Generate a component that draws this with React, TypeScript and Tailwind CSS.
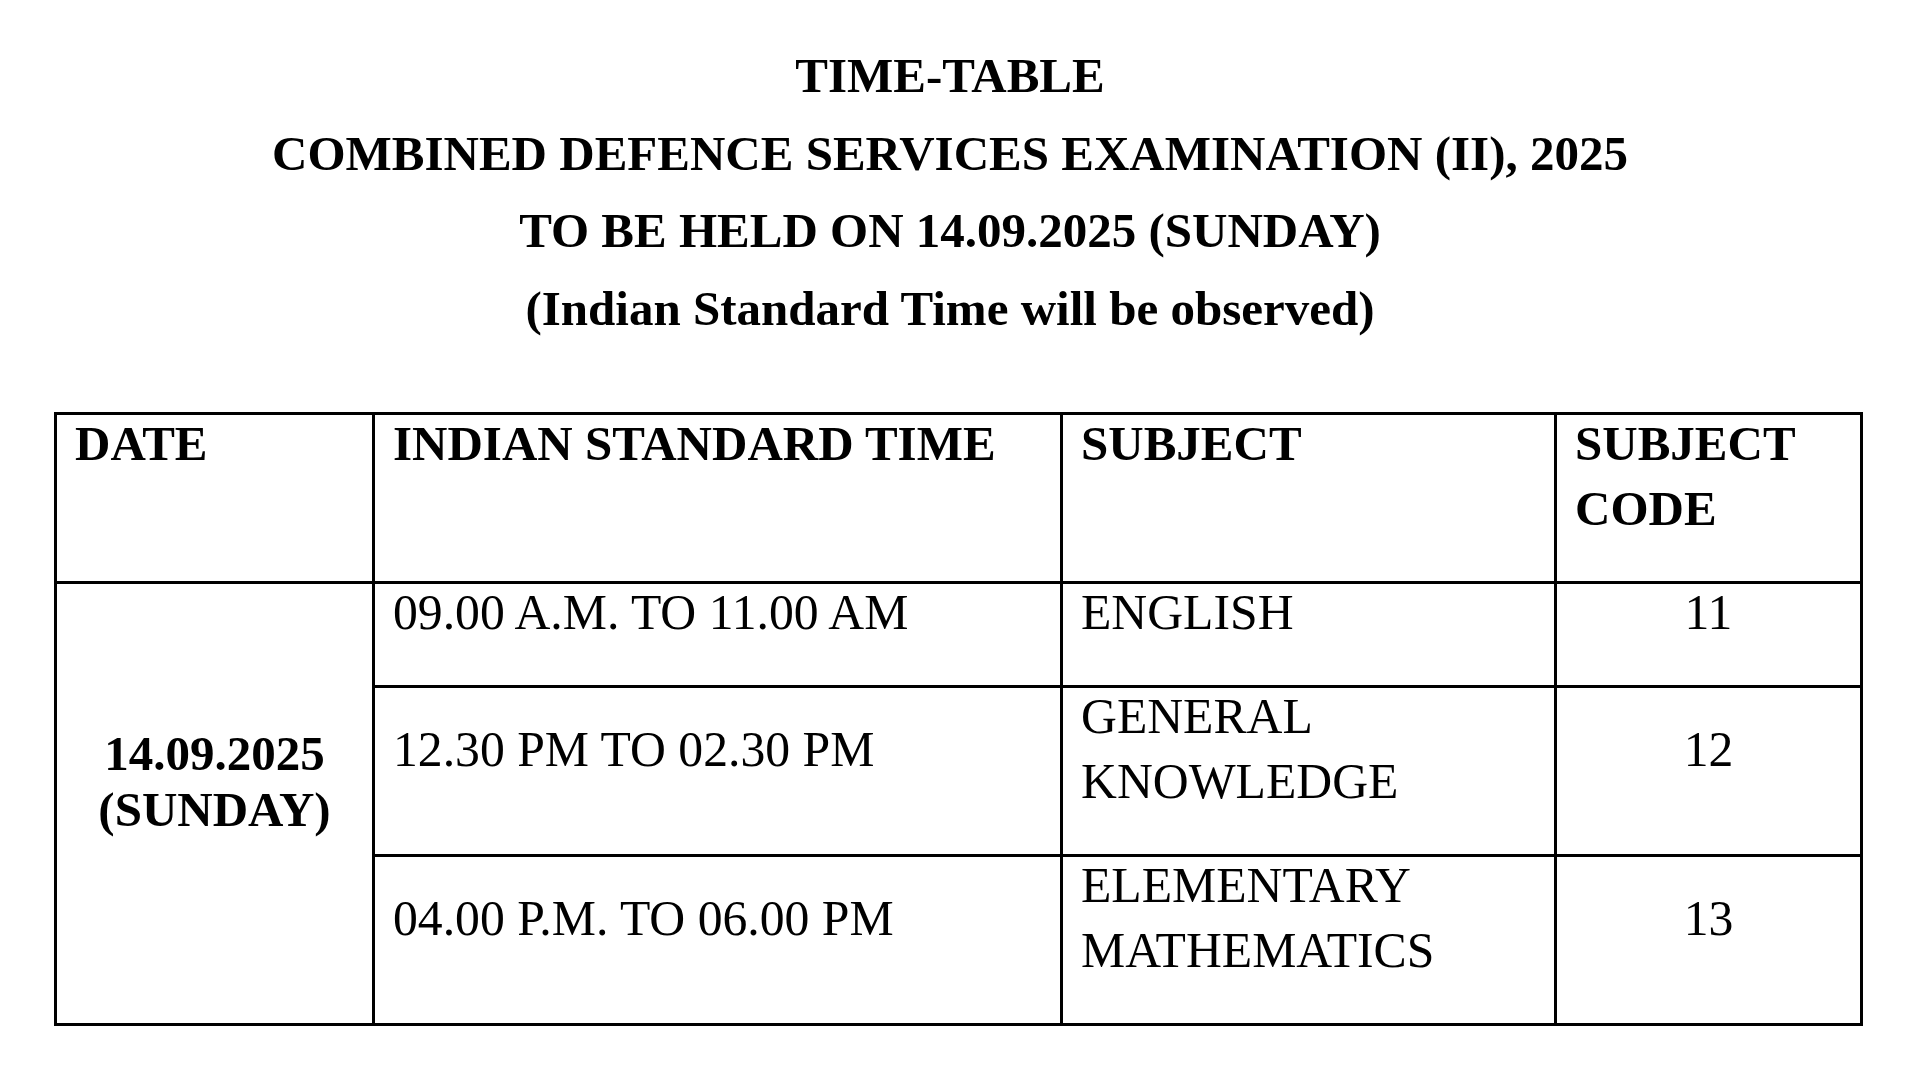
const rows = [
  { time: "09.00 A.M. TO 11.00 AM", subject: "ENGLISH", code: "11" },
  { time: "12.30 PM TO 02.30 PM", subject: "GENERAL KNOWLEDGE", code: "12" },
  { time: "04.00 P.M. TO 06.00 PM", subject: "ELEMENTARY MATHEMATICS", code: "13" },
];

const cell = "border-[3px] border-black px-[18px] pt-0 pb-[36px]";

export default function App() {
  return (
    <div className="min-h-screen w-full bg-white text-black font-['Liberation_Serif','Times_New_Roman',serif] text-[49px]">
      {/* Heading */}
      <div className="w-[1900px] pt-[37px] text-center font-bold leading-[77.5px]">
        <p>TIME-TABLE</p>
        <p>COMBINED DEFENCE SERVICES EXAMINATION (II), 2025</p>
        <p>TO BE HELD ON 14.09.2025 (SUNDAY)</p>
        <p>(Indian Standard Time will be observed)</p>
      </div>

      {/* Schedule */}
      <table className="mt-[65px] ml-[54px] w-[1808px] table-fixed border-collapse leading-[65px]">
        <colgroup>
          <col className="w-[318px]" />
          <col className="w-[688px]" />
          <col className="w-[494px]" />
          <col className="w-[306px]" />
        </colgroup>
        <thead>
          <tr className="font-bold text-left align-top">
            <th className={cell}>
              <div className="relative -top-1">DATE</div>
            </th>
            <th className={cell}>
              <div className="relative -top-1">INDIAN STANDARD TIME</div>
            </th>
            <th className={cell}>
              <div className="relative -top-1">SUBJECT</div>
            </th>
            <th className={cell}>
              <div className="relative -top-1">SUBJECT CODE</div>
            </th>
          </tr>
        </thead>
        <tbody>
          {rows.map((row, i) => (
            <tr key={row.code} className="align-middle text-[49.7px]">
              {i === 0 && (
                <td rowSpan={3} className={`${cell} text-center font-bold text-[49px] leading-[56px]`}>
                  <div className="relative -top-1">
                    14.09.2025
                    <br />
                    (SUNDAY)
                  </div>
                </td>
              )}
              <td className={cell}>
                <div className="relative -top-1">{row.time}</div>
              </td>
              <td className={cell}>
                <div className="relative -top-1">{row.subject}</div>
              </td>
              <td className={`${cell} text-center`}>
                <div className="relative -top-1">{row.code}</div>
              </td>
            </tr>
          ))}
        </tbody>
      </table>
    </div>
  );
}
